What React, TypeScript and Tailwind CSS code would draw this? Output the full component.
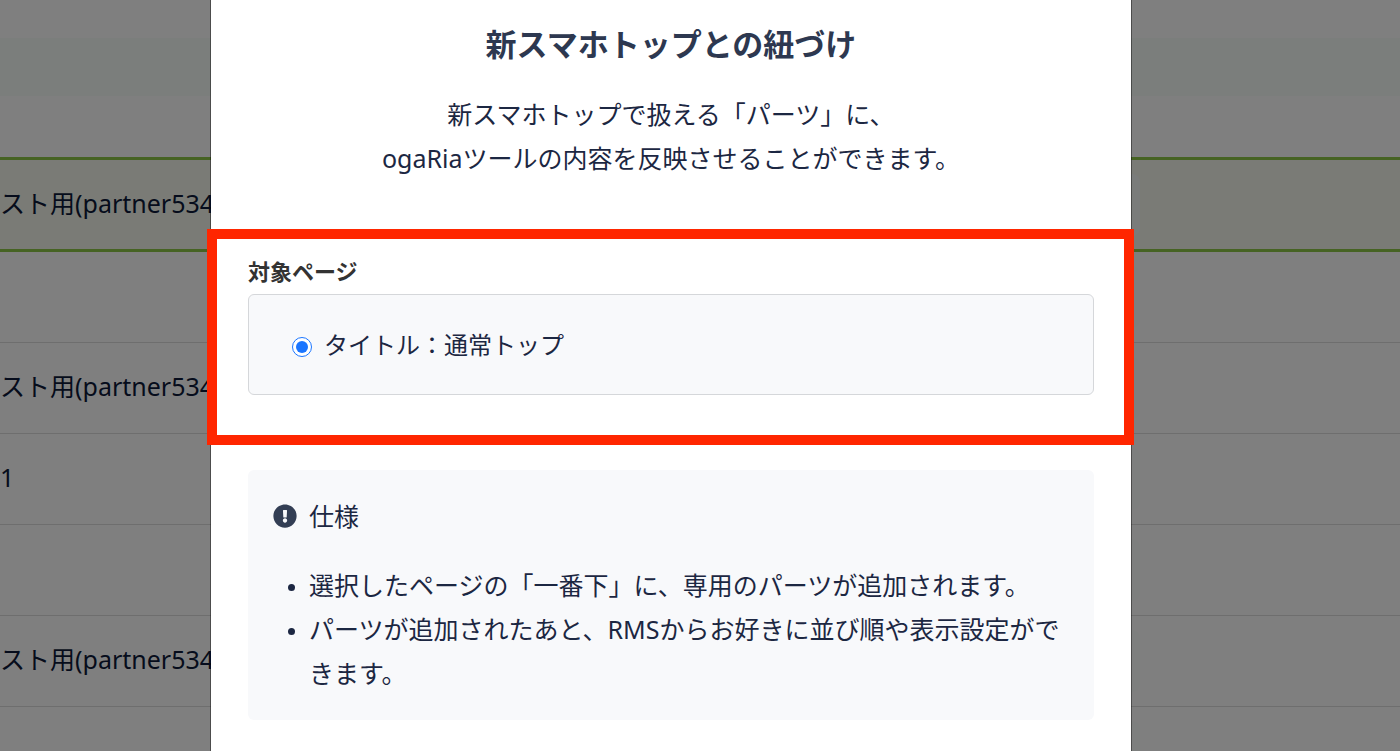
import { FaExclamationCircle } from "react-icons/fa";

const rows = [
  { name: "スト用(partner534", active: true },
  { name: "", active: false },
  { name: "スト用(partner534", active: false },
  { name: "1", active: false },
  { name: "", active: false },
  { name: "スト用(partner534", active: false },
  { name: "", active: false },
];

function ShopTable() {
  return (
    <div className="absolute inset-0 overflow-hidden bg-white" aria-hidden="true">
      <div className="mt-[38px] h-[58px] bg-[#f6fcf9]" />
      <table className="mt-[61px] w-full border-collapse text-[#0c1838]">
        <tbody>
          {rows.map((row, i) => (
            <tr
              key={i}
              className={
                row.active
                  ? "block border-y-3 border-[#8cc646] bg-[#f4f7ec]"
                  : "block border-b border-[#dcdcdc]"
              }
            >
              <td
                className={
                  row.active
                    ? "flex h-[89px] items-center"
                    : "flex h-[90px] items-center"
                }
              >
                <span className="w-[1080px] pb-1 whitespace-nowrap">
                  {row.name}
                </span>
                <span
                  className={
                    row.active
                      ? "h-[62px] w-[60px] rounded-lg bg-[#f5f8f7]"
                      : "h-[62px] w-[60px] rounded-lg bg-[#fbfefc]"
                  }
                />
              </td>
            </tr>
          ))}
        </tbody>
      </table>
    </div>
  );
}

function TargetPage() {
  return (
    <fieldset className="-mr-[3px] -ml-1 mt-[49px] border-10 border-[#ff2600] pt-4 pr-[30px] pb-10 pl-[31px]">
      <div className="text-[22px] leading-8 font-bold text-[#333333]">
        対象ページ
      </div>
      <div className="mt-[7px] flex h-[101px] items-center rounded-md border border-[#d5d7da] bg-[#f8f9fb] px-[43px]">
        <label className="flex items-center gap-3 text-[24px] leading-[44px]">
          <input
            type="radio"
            name="page"
            defaultChecked
            className="mt-1 size-5 accent-[#1a75ff]"
          />
          タイトル：通常トップ
        </label>
      </div>
    </fieldset>
  );
}

function Spec() {
  return (
    <section className="mx-[37px] mt-[25px] rounded-md bg-[#f8f9fb] px-6 pt-6 pb-[25px]">
      <h3 className="flex items-center gap-3 pl-px">
        <FaExclamationCircle className="size-6 text-[#333e54]" />
        仕様
      </h3>
      <ul className="mt-[25px] list-disc pl-[37px] marker:text-[20px]">
        <li>選択したページの「一番下」に、専用のパーツが追加されます。</li>
        <li>パーツが追加されたあと、RMSからお好きに並び順や表示設定ができます。</li>
      </ul>
    </section>
  );
}

export default function App() {
  return (
    <div className="relative min-h-screen overflow-hidden font-['Noto_Sans','Noto_Sans_CJK_JP',sans-serif] text-[25px] leading-[44px] text-[#1c2742]">
      <ShopTable />
      <div className="relative flex min-h-screen justify-center bg-black/50 pr-[58px]">
        <div
          role="dialog"
          aria-labelledby="dialog-title"
          className="w-full max-w-[920px] bg-white shadow-[0_0_0_1px_rgba(0,0,0,0.4)]"
        >
          <h2
            id="dialog-title"
            className="pt-[22px] text-center text-[31px] leading-[44px] font-bold text-[#2d3850]"
          >
            新スマホトップとの紐づけ
          </h2>
          <p className="mt-[26px] text-center">
            新スマホトップで扱える「パーツ」に、
            <br />
            ogaRiaツールの内容を反映させることができます。
          </p>
          <TargetPage />
          <Spec />
        </div>
      </div>
    </div>
  );
}
